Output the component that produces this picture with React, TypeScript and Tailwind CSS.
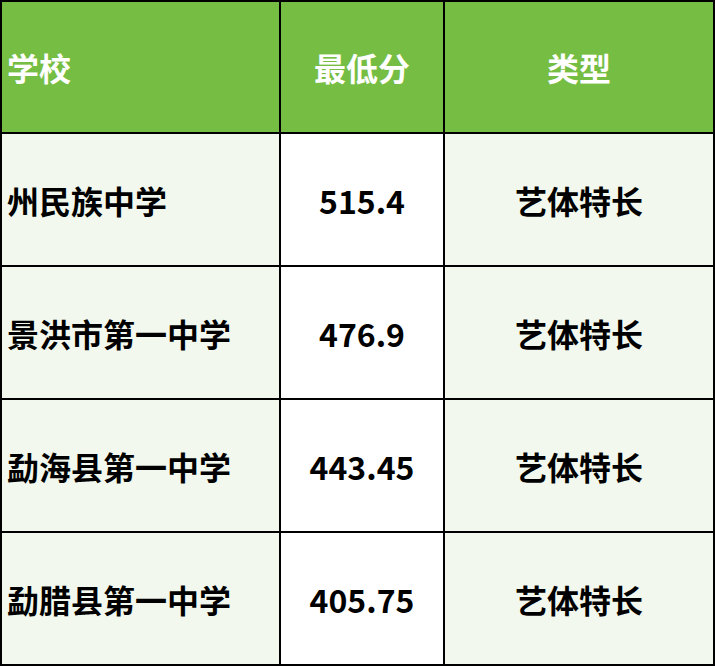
import React from "react";

const rows = [
  { school: "州民族中学", score: "515.4", type: "艺体特长" },
  { school: "景洪市第一中学", score: "476.9", type: "艺体特长" },
  { school: "勐海县第一中学", score: "443.45", type: "艺体特长" },
  { school: "勐腊县第一中学", score: "405.75", type: "艺体特长" },
];

export default function App() {
  return (
    <div
      className="w-[715px] h-[666px] bg-black p-[2px] grid grid-cols-[277px_162px_268px] grid-rows-[130px_131px_131px_131px_131px] gap-[2px] font-bold text-[32px] leading-none"
      style={{ fontFamily: '"Noto Sans CJK SC", "Noto Sans", sans-serif' }}
    >
      <div className="bg-[#76bd43] text-white flex items-center pl-[5px]">学校</div>
      <div className="bg-[#76bd43] text-white flex items-center justify-center">最低分</div>
      <div className="bg-[#76bd43] text-white flex items-center justify-center">类型</div>
      {rows.map((r) => (
        <React.Fragment key={r.school}>
          <div className="bg-[#f2f8ee] text-black flex items-center pl-[5px]">{r.school}</div>
          <div className="bg-white text-black flex items-center justify-center">{r.score}</div>
          <div className="bg-[#f2f8ee] text-black flex items-center justify-center">{r.type}</div>
        </React.Fragment>
      ))}
    </div>
  );
}
